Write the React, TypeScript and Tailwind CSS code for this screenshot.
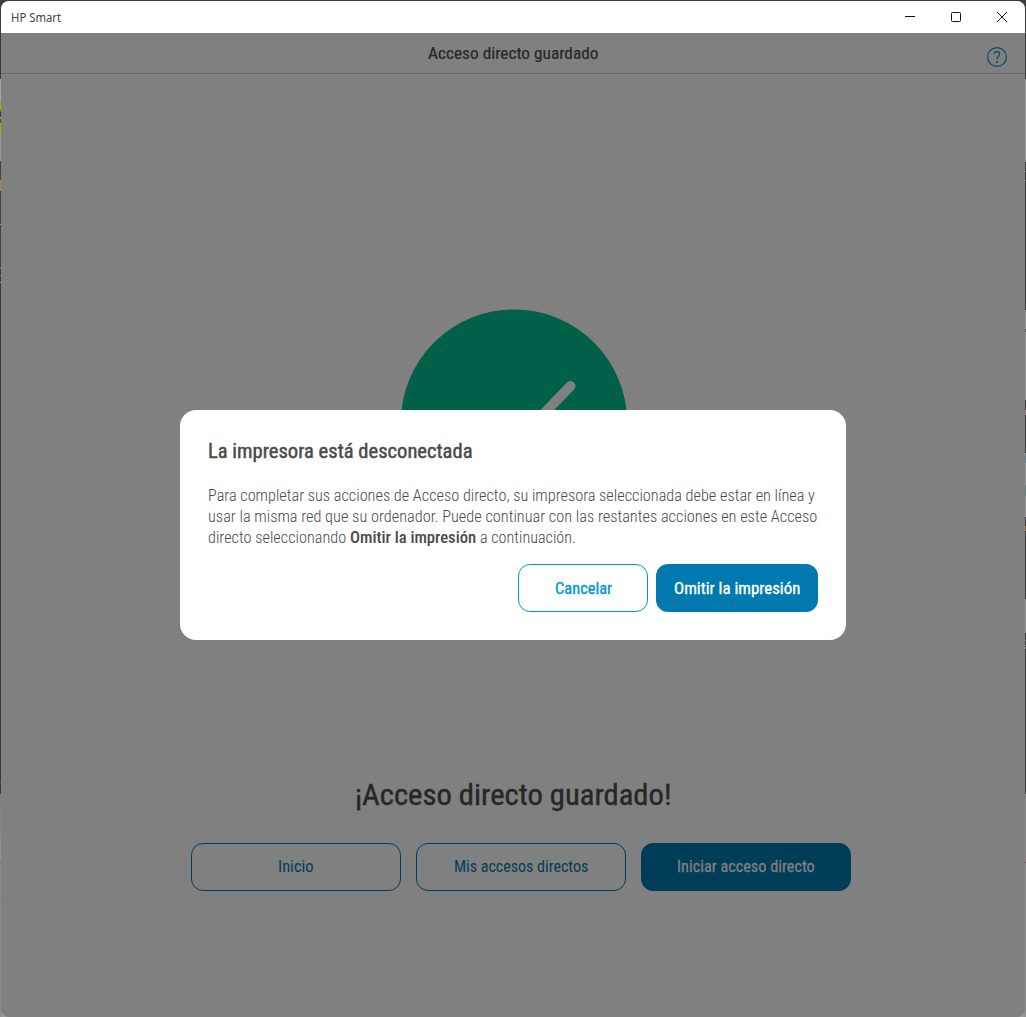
import { useLayoutEffect, useRef, useState, type ReactNode } from "react";

/* Text condensed horizontally to a fixed width. */
function Fit({ width, className = "", children }: { width: number; className?: string; children: ReactNode }) {
  const ref = useRef<HTMLSpanElement>(null);
  const [scale, setScale] = useState(1);
  useLayoutEffect(() => {
    const natural = ref.current?.offsetWidth ?? 0;
    if (natural > 0) setScale(width / natural);
  }, [width]);
  return (
    <span className={`inline-block whitespace-nowrap text-left ${className}`} style={{ width }}>
      <span ref={ref} className="inline-block origin-left" style={{ transform: `scaleX(${scale})` }}>
        {children}
      </span>
    </span>
  );
}

type Segment = [height: number, color: string];

const leftEdge: Segment[] = [
  [79, "#3c3c3c"], [22, "#a5a5a5"], [9, "#a9a613"], [2, "#6b6b20"], [5, "#3a3a3a"], [2, "#a9a613"],
  [4, "#4a4a3a"], [10, "#a9a613"], [28, "#999999"], [19, "#444444"], [11, "#b08a45"], [33, "#444444"],
  [1, "#9a9a9a"], [43, "#444444"], [1, "#888888"], [6, "#3a3a3a"], [1, "#5f8aa0"], [6, "#3a3a3a"],
  [1, "#999999"], [499, "#3c3c3c"], [2, "#34508c"], [10, "#3a3a3a"], [8, "#8c7c5c"], [25, "#858585"],
  [5, "#9a8650"], [12, "#8c8c8c"], [9, "#7a9a93"], [9, "#909090"], [1, "#a04060"], [15, "#8c8c8c"],
  [6, "#98874f"], [11, "#8c8c8c"], [10, "#a08462"], [122, "#8c8c8c"],
];

const rightEdge: Segment[] = [
  [79, "#3c3c3c"], [83, "#a0a0a0"], [9, "#383838"], [1, "#777777"], [8, "#383838"], [1, "#777777"],
  [129, "#383838"], [19, "#999999"], [3, "#555555"], [68, "#999999"], [10, "#3c3c3c"], [5, "#9c7c7c"],
  [38, "#3c3c3c"], [3, "#999999"], [7, "#5f8797"], [22, "#999999"], [11, "#60807d"], [21, "#999999"],
  [9, "#3c3c3c"], [5, "#9c7656"], [68, "#383838"], [34, "#929292"], [7, "#3c3c3c"], [1, "#777777"],
  [4, "#3c3c3c"], [1, "#777777"], [1, "#3c3c3c"], [2, "#777777"], [145, "#3c3c3c"], [68, "#858585"],
  [1, "#a04060"], [154, "#8c8c8c"],
];

function Edge({ segments }: { segments: Segment[] }) {
  return (
    <div className="flex h-full w-px shrink-0 flex-col overflow-hidden">
      {segments.map(([height, backgroundColor], i) => (
        <div key={i} className="w-px shrink-0" style={{ height, backgroundColor }} />
      ))}
    </div>
  );
}

function TitleBar() {
  return (
    <div className="flex h-8 shrink-0 items-center justify-between bg-white">
      <div className="pl-[10px] pt-px font-['Noto_Sans',sans-serif] text-[12px] leading-4 text-[#444]">
        <Fit width={50}>HP Smart</Fit>
      </div>
      <div className="flex">
        <svg className="h-8 w-[46px]" viewBox="0 0 46 32" fill="none" stroke="#111" aria-label="Minimizar">
          <path d="M18 15.5h10" />
        </svg>
        <svg className="h-8 w-[46px]" viewBox="0 0 46 32" fill="none" stroke="#111" aria-label="Maximizar">
          <rect x="18.5" y="11.5" width="9" height="9" rx="1" />
        </svg>
        <svg className="h-8 w-[46px]" viewBox="0 0 46 32" fill="none" stroke="#111" aria-label="Cerrar">
          <path d="M18 11l10 10M28 11l-10 10" />
        </svg>
      </div>
    </div>
  );
}

function Header() {
  return (
    <div className="grid h-[41px] shrink-0 grid-cols-[1fr_auto_1fr] border-b border-[#6b6b6b] text-[#272727]">
      <span />
      <h1 className="pt-2 text-[17px] leading-6 font-normal [-webkit-text-stroke:0.2px]">
        <Fit width={170}>Acceso directo guardado</Fit>
      </h1>
      <div className="flex justify-end pt-[13px] pr-[17px]">
        <svg className="size-[22px]" viewBox="0 0 22 22" fill="none" stroke="#084866" strokeWidth="1.2">
          <circle cx="11" cy="11" r="9.4" />
          <path d="M8.2 8.2c.2-1.6 1.3-2.6 2.8-2.6 1.6 0 2.7 1 2.7 2.5 0 2.2-2.7 2.3-2.7 4.7v.5" />
          <path d="M11 15.2v1.7" strokeWidth="1.7" />
        </svg>
      </div>
    </div>
  );
}

function Dialog() {
  return (
    <div
      role="dialog"
      className="absolute top-[410px] left-[180px] flex h-[230px] w-[666px] flex-col rounded-[16px] bg-white px-7 text-[#4a4a4a]"
    >
      <h2 className="mt-[27px] h-7 text-[20.5px] leading-7 font-normal [-webkit-text-stroke:0.45px]">
        <Fit width={265}>La impresora está desconectada</Fit>
      </h2>
      <p className="mt-5 flex flex-col text-[16.5px] leading-[21px] font-light">
        <Fit width={607}>Para completar sus acciones de Acceso directo, su impresora seleccionada debe estar en línea y</Fit>
        <Fit width={609}>usar la misma red que su ordenador. Puede continuar con las restantes acciones en este Acceso</Fit>
        <span className="flex gap-1">
          <Fit width={138}>directo seleccionando</Fit>
          <Fit width={126} className="font-medium">Omitir la impresión</Fit>
          <Fit width={96}>a continuación.</Fit>
        </span>
      </p>
      <div className="mt-4 flex justify-end gap-2 text-[17px] font-normal [-webkit-text-stroke:0.35px] *:flex *:h-12 *:items-center *:justify-center *:rounded-[12px] *:pt-0.5">
        <button className="w-[130px] border border-[#0096d6] text-[#0096d6]">
          <Fit width={57}>Cancelar</Fit>
        </button>
        <button className="w-[162px] bg-[#007aae] text-white">
          <Fit width={126}>Omitir la impresión</Fit>
        </button>
      </div>
    </div>
  );
}

export default function App() {
  return (
    <div className="relative flex h-[1017px] w-[1026px] overflow-hidden bg-[#3c3c3c] font-[Roboto,sans-serif] font-stretch-condensed">
      <Edge segments={leftEdge} />
      <div className="flex min-w-0 flex-1 flex-col bg-[linear-gradient(#3c3c3c_50%,#999_50%)] pt-px">
        <div className="flex flex-1 flex-col overflow-hidden rounded-[8px] bg-[#808080]">
          <TitleBar />
          <Header />
          <main className="flex flex-1 flex-col items-center">
            <svg className="mt-[235px] ml-px h-[227px] w-[228px]" viewBox="0 0 228 227" fill="none">
              <circle cx="114" cy="113.6" r="113.2" fill="#006048" />
              <path d="M59 119l37 35 74.5-77" stroke="#808080" strokeWidth="10" strokeLinecap="round" strokeLinejoin="round" />
            </svg>
            <h2 className="mt-[239px] text-[29px] leading-10 font-normal text-[#272727] [-webkit-text-stroke:0.4px]">
              <Fit width={317}>¡Acceso directo guardado!</Fit>
            </h2>
            <div className="mt-[28px] ml-4 flex gap-[15px] text-[16.5px] text-[#003d59] *:flex *:h-12 *:w-[210px] *:items-center *:justify-center *:rounded-[12px] *:border *:border-[#003d59] *:pt-px">
              <button>
                <Fit width={36}>Inicio</Fit>
              </button>
              <button>
                <Fit width={134}>Mis accesos directos</Fit>
              </button>
              <button className="bg-[#003d59] text-[#808080] [-webkit-text-stroke:0.3px]">
                <Fit width={138}>Iniciar acceso directo</Fit>
              </button>
            </div>
          </main>
        </div>
      </div>
      <Edge segments={rightEdge} />
      <Dialog />
    </div>
  );
}
